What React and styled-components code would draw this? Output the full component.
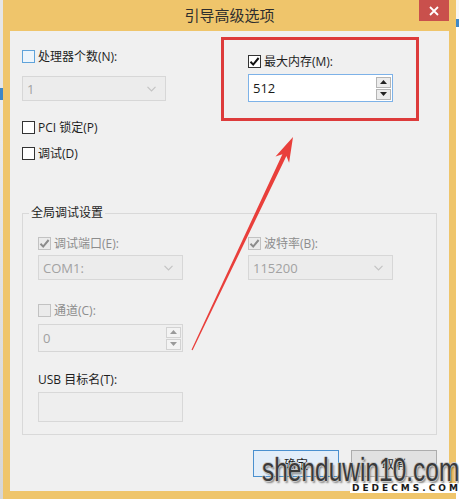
import React from "react";
import styled, { createGlobalStyle } from "styled-components";

const GlobalStyle = createGlobalStyle`
  body {
    margin: 0;
    background: #ffffff;
  }
`;

const UI_FONT = `"Open Sans", "Noto Sans CJK SC", sans-serif`;

const Check = ({ checked, $variant }) => (
  <Box $variant={$variant}>
    {checked && (
      <svg width="11" height="11" viewBox="0 0 11 11">
        <path
          d="M1.5 5.8 L4.2 8.6 L9.6 2"
          fill="none"
          stroke={$variant === "disabled" ? "#8c8c8c" : "#111"}
          strokeWidth="2"
        />
      </svg>
    )}
  </Box>
);

const Select = ({ value, width }) => (
  <SelectBox $width={width}>
    <span>{value}</span>
    <svg width="9" height="6" viewBox="0 0 9 6">
      <path d="M0.5 0.8 L4.5 4.8 L8.5 0.8" fill="none" stroke="#c4c4c4" strokeWidth="1.2" />
    </svg>
  </SelectBox>
);

const Spin = ({ value, disabled }) => (
  <SpinBox $disabled={disabled}>
    <span>{value}</span>
    <SpinButtons>
      <SpinBtn $disabled={disabled}>
        <svg width="7" height="4" viewBox="0 0 7 4">
          <path d="M0 4 L3.5 0 L7 4 Z" fill={disabled ? "#9a9a9a" : "#222"} />
        </svg>
      </SpinBtn>
      <SpinBtn $disabled={disabled}>
        <svg width="7" height="4" viewBox="0 0 7 4">
          <path d="M0 0 L3.5 4 L7 0 Z" fill={disabled ? "#9a9a9a" : "#222"} />
        </svg>
      </SpinBtn>
    </SpinButtons>
  </SpinBox>
);

export default function App() {
  return (
    <Screen>
      <GlobalStyle />
      <LeftEdge />
      <Window>
        <TitleBar>
          <span />
          <Title>引导高级选项</Title>
          <CloseButton>
            <svg width="10" height="10" viewBox="0 0 10 10">
              <path d="M1 1 L9 9 M9 1 L1 9" stroke="#fff" strokeWidth="1.8" />
            </svg>
          </CloseButton>
        </TitleBar>

        <Content>
          <TopSection>
            <LeftColumn>
              <CheckRow>
                <Check $variant="focus" />
                <Label>处理器个数(N):</Label>
              </CheckRow>
              <FieldGap $h={13} />
              <Select value="1" width={144} />
              <FieldGap $h={20} />
              <CheckRow>
                <Check />
                <Label>PCI 锁定(P)</Label>
              </CheckRow>
              <FieldGap $h={13} />
              <CheckRow>
                <Check />
                <Label>调试(D)</Label>
              </CheckRow>
            </LeftColumn>

            <MarkedBox>
              <CheckRow>
                <Check checked />
                <Label>最大内存(M):</Label>
              </CheckRow>
              <FieldGap $h={6} />
              <Spin value="512" />
            </MarkedBox>
          </TopSection>

          <Group>
            <Legend>全局调试设置</Legend>
            <GroupGrid>
              <Cell>
                <CheckRow>
                  <Check checked $variant="disabled" />
                  <Label $disabled>调试端口(E):</Label>
                </CheckRow>
                <FieldGap $h={5} />
                <Select value="COM1:" width={145} />
              </Cell>
              <Cell>
                <CheckRow>
                  <Check checked $variant="disabled" />
                  <Label $disabled>波特率(B):</Label>
                </CheckRow>
                <FieldGap $h={5} />
                <Select value="115200" width={145} />
              </Cell>
              <Cell $top={24}>
                <CheckRow>
                  <Check $variant="disabled" />
                  <Label $disabled>通道(C):</Label>
                </CheckRow>
                <FieldGap $h={7} />
                <Spin value="0" disabled />
              </Cell>
              <span />
              <Cell $top={20}>
                <Label>USB 目标名(T):</Label>
                <FieldGap $h={4} />
                <TextBox />
              </Cell>
            </GroupGrid>
          </Group>

          <ButtonRow>
            <Button $primary>确定</Button>
            <Button>取消</Button>
          </ButtonRow>
        </Content>
      </Window>
      <RightEdge />

      <Arrow width="459" height="499" viewBox="0 0 459 499">
        <polygon
          points="293,137 289.1,162.8 286.4,156 192.6,350.2 191.5,349.8 282.4,154.2 275.5,156.4"
          fill="#e8302b"
          opacity="0.92"
        />
      </Arrow>

      <Watermark>
        <WatermarkSub>DEDECMS.COM</WatermarkSub>
        <WatermarkText>shenduwin10.com</WatermarkText>
      </Watermark>
    </Screen>
  );
}

const Screen = styled.div`
  position: relative;
  width: 459px;
  height: 499px;
  overflow: hidden;
  display: flex;
  font-family: ${UI_FONT};
`;

const LeftEdge = styled.div`
  width: 3px;
  background: linear-gradient(
    to bottom,
    #e6e6e6 0,
    #e6e6e6 88px,
    #3d86c6 88px,
    #3d86c6 100px,
    #ececec 100px,
    #d6d6d6 100%
  );
`;

const RightEdge = styled.div`
  width: 3px;
  background: linear-gradient(
    to bottom,
    #f7f7f7 0,
    #f7f7f7 19px,
    #3f88c8 19px,
    #3f88c8 27px,
    #ffffff 27px,
    #ffffff 100%
  );
`;

const Window = styled.div`
  width: 453px;
  height: 499px;
  box-sizing: border-box;
  background: #efc56b;
  padding: 0 7px 8px 7px;
  display: flex;
  flex-direction: column;
`;

const TitleBar = styled.div`
  height: 31px;
  display: grid;
  grid-template-columns: 1fr auto 1fr;
  align-items: start;
`;

const Title = styled.div`
  font-family: "Noto Sans CJK SC", sans-serif;
  font-size: 15px;
  line-height: 30px;
  color: #2e2e2e;
`;

const CloseButton = styled.div`
  justify-self: end;
  width: 30px;
  height: 21px;
  background: #c9504c;
  display: flex;
  align-items: center;
  justify-content: center;
`;

const Content = styled.div`
  flex: 1;
  background: #f0f0f0;
  padding: 6px 12px 0 12px;
  display: flex;
  flex-direction: column;
`;

const TopSection = styled.div`
  display: flex;
  align-items: flex-start;
`;

const LeftColumn = styled.div`
  width: 199px;
  padding-top: 13px;
  display: flex;
  flex-direction: column;
  align-items: flex-start;
`;

const MarkedBox = styled.div`
  width: 198px;
  height: 84px;
  box-sizing: border-box;
  border: 3px solid #dd3b3b;
  padding: 15px 0 0 24px;
  display: flex;
  flex-direction: column;
  align-items: flex-start;
`;

const FieldGap = styled.div`
  height: ${(p) => p.$h}px;
  flex: none;
`;

const CheckRow = styled.div`
  display: flex;
  align-items: center;
  gap: 3px;
  height: 13px;
`;

const Box = styled.span`
  width: 13px;
  height: 13px;
  box-sizing: border-box;
  display: flex;
  align-items: center;
  justify-content: center;
  flex: none;
  border: 1px solid
    ${(p) =>
      p.$variant === "focus" ? "#5fa3da" : p.$variant === "disabled" ? "#c2c2c2" : "#333333"};
  background: ${(p) =>
    p.$variant === "focus" ? "#edf5fc" : p.$variant === "disabled" ? "#ebebeb" : "#ffffff"};
`;

const Label = styled.span`
  font-size: 12px;
  line-height: 16px;
  color: ${(p) => (p.$disabled ? "#8d8d8d" : "#1e1e1e")};
  white-space: nowrap;
`;

const SelectBox = styled.div`
  width: ${(p) => p.$width}px;
  height: 25px;
  box-sizing: border-box;
  border: 1px solid #d7d7d7;
  background: #ececec;
  display: flex;
  align-items: center;
  justify-content: space-between;
  padding: 0 9px 0 4px;
  font-size: 13px;
  color: #a2a2a2;
`;

const SpinBox = styled.div`
  width: 145px;
  height: 28px;
  box-sizing: border-box;
  border: 1px solid ${(p) => (p.$disabled ? "#d6d6d6" : "#7db2e8")};
  background: ${(p) => (p.$disabled ? "#efefef" : "#ffffff")};
  display: flex;
  align-items: center;
  justify-content: space-between;
  padding: 0 1px 0 4px;
  font-size: 13px;
  color: ${(p) => (p.$disabled ? "#a0a0a0" : "#1a1a1a")};
`;

const SpinButtons = styled.div`
  display: flex;
  flex-direction: column;
  gap: 1px;
`;

const SpinBtn = styled.div`
  width: 15px;
  height: 11px;
  box-sizing: border-box;
  border: 1px solid ${(p) => (p.$disabled ? "#d2d2d2" : "#b5b5b5")};
  background: ${(p) => (p.$disabled ? "#f3f3f3" : "#ececec")};
  display: flex;
  align-items: center;
  justify-content: center;
`;

const TextBox = styled.div`
  width: 145px;
  height: 30px;
  box-sizing: border-box;
  border: 1px solid #d8d8d8;
  background: #eeeeee;
`;

const Group = styled.fieldset`
  margin: 45px 0 0 0;
  padding: 0;
  border: 1px solid #d9d9d9;
  min-width: 0;
`;

const Legend = styled.legend`
  margin-left: 6px;
  padding: 0 2px;
  font-size: 12px;
  line-height: 16px;
  color: #1e1e1e;
`;

const GroupGrid = styled.div`
  padding: 16px 0 12px 15px;
  display: grid;
  grid-template-columns: 210px 145px;
`;

const Cell = styled.div`
  padding-top: ${(p) => p.$top || 0}px;
  display: flex;
  flex-direction: column;
  align-items: flex-start;
`;

const ButtonRow = styled.div`
  margin-top: 15px;
  display: flex;
  justify-content: flex-end;
  gap: 12px;
`;

const Button = styled.div`
  width: 86px;
  height: 27px;
  box-sizing: border-box;
  border: 1px solid ${(p) => (p.$primary ? "#4a90cf" : "#adadad")};
  background: ${(p) => (p.$primary ? "#e3eef9" : "#e1e1e1")};
  display: flex;
  align-items: center;
  justify-content: center;
  font-size: 12px;
  color: #1e1e1e;
`;

const Arrow = styled.svg`
  position: absolute;
  left: 0;
  top: 0;
  pointer-events: none;
`;

const Watermark = styled.div`
  position: absolute;
  left: 262px;
  top: 451px;
  width: 197px;
  height: 45px;
  pointer-events: none;
`;

const WatermarkText = styled.div`
  position: relative;
  font-family: "Liberation Sans", sans-serif;
  font-size: 34px;
  line-height: 36px;
  white-space: nowrap;
  transform: scaleX(0.72);
  transform-origin: left center;
  color: #3a3a3a;
  text-shadow: 1px 0 0 #c8c8c8, -1px 0 0 #c8c8c8, 0 1px 0 #c8c8c8, 0 -1px 0 #c8c8c8,
    2px 2px 2px rgba(0, 0, 0, 0.45);
`;

const WatermarkSub = styled.div`
  position: absolute;
  left: 88px;
  top: 32px;
  font-family: "DejaVu Sans", sans-serif;
  font-weight: bold;
  font-size: 9px;
  letter-spacing: 3px;
  color: #1a1a1a;
  background: #ffffff;
  padding: 0 2px;
`;
